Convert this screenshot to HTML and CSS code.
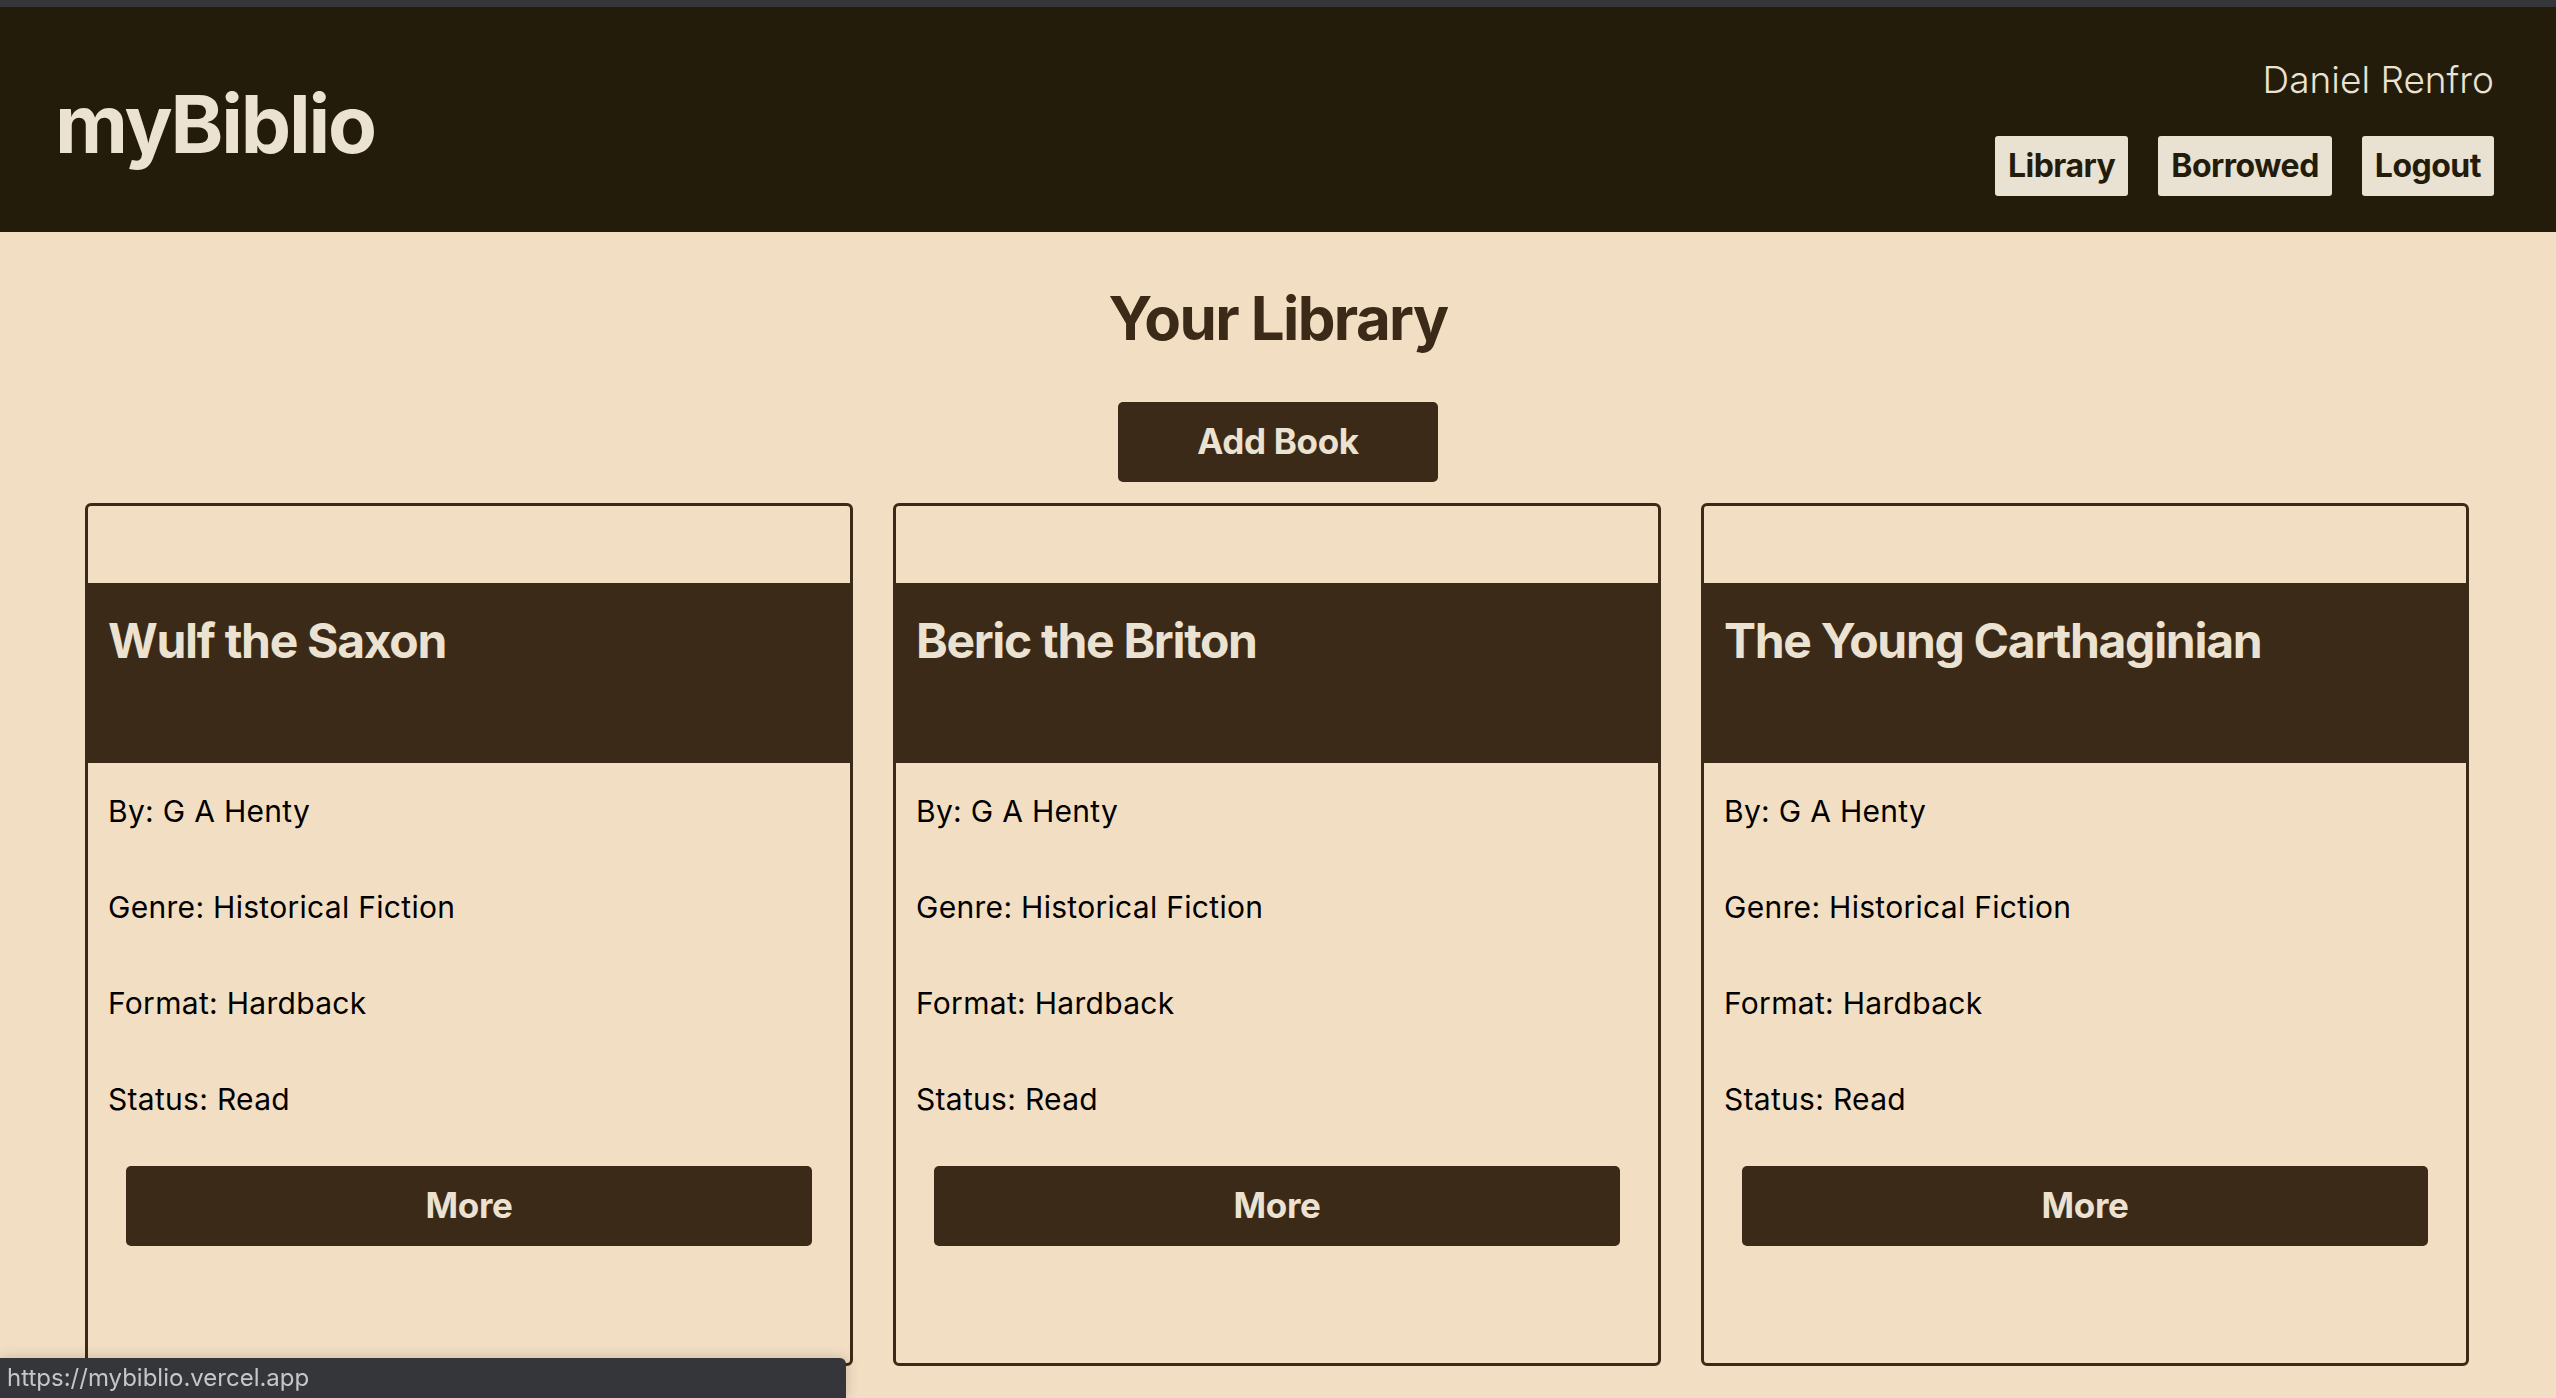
FILE: index.html
```html
<!DOCTYPE html>
<html lang="en">
<head>
<meta charset="utf-8">
<title>myBiblio</title>
<link rel="stylesheet" href="styles.css">
</head>
<body>
<div class="chrome-strip"></div>
<header class="site-header">
  <div class="logo">myBiblio</div>
  <div class="user-area">
    <div class="user-name">Daniel Renfro</div>
    <nav class="nav">
      <button class="nav-btn">Library</button>
      <button class="nav-btn">Borrowed</button>
      <button class="nav-btn">Logout</button>
    </nav>
  </div>
</header>
<main class="main">
  <h1 class="page-title">Your Library</h1>
  <button class="add-btn">Add Book</button>
  <section class="cards">
    <article class="card">
      <div class="card-image"></div>
      <div class="card-band"><h2 class="card-title">Wulf the Saxon</h2></div>
      <div class="card-body">
        <p class="card-line">By: G A Henty</p>
        <p class="card-line">Genre: Historical Fiction</p>
        <p class="card-line">Format: Hardback</p>
        <p class="card-line">Status: Read</p>
      </div>
      <button class="more-btn">More</button>
    </article>
    <article class="card">
      <div class="card-image"></div>
      <div class="card-band"><h2 class="card-title">Beric the Briton</h2></div>
      <div class="card-body">
        <p class="card-line">By: G A Henty</p>
        <p class="card-line">Genre: Historical Fiction</p>
        <p class="card-line">Format: Hardback</p>
        <p class="card-line">Status: Read</p>
      </div>
      <button class="more-btn">More</button>
    </article>
    <article class="card">
      <div class="card-image"></div>
      <div class="card-band"><h2 class="card-title">The Young Carthaginian</h2></div>
      <div class="card-body">
        <p class="card-line">By: G A Henty</p>
        <p class="card-line">Genre: Historical Fiction</p>
        <p class="card-line">Format: Hardback</p>
        <p class="card-line">Status: Read</p>
      </div>
      <button class="more-btn">More</button>
    </article>
  </section>
</main>
<div class="status-bar">https://mybiblio.vercel.app</div>
</body>
</html>
```
FILE: styles.css
```css
* { box-sizing: border-box; }
html, body {
  margin: 0;
  padding: 0;
}
body {
  background: #f2dfc3;
  font-family: Inter, "Noto Sans", "Liberation Sans", sans-serif;
  color: #000;
  min-height: 1398px;
}
.chrome-strip {
  height: 7px;
  background: #35363a;
}
.site-header {
  height: 225px;
  background: #231c0b;
  display: flex;
  justify-content: space-between;
  align-items: center;
  padding: 0 62px 0 55px;
}
.logo {
  font-size: 80px;
  font-weight: 700;
  line-height: 1;
  color: #ebe2d2;
  letter-spacing: -2.2px;
  margin-top: 8px;
}
.user-area {
  display: flex;
  flex-direction: column;
  align-items: flex-end;
  margin-top: 14px;
}
.user-name {
  font-size: 37px;
  font-weight: 300;
  line-height: 45px;
  color: #ebe2d2;
  letter-spacing: 0;
}
.nav {
  display: flex;
  gap: 30px;
  margin-top: 34px;
}
.nav-btn {
  font-family: inherit;
  font-size: 32px;
  font-weight: 700;
  line-height: 40px;
  height: 60px;
  padding: 10px 13px;
  border: none;
  border-radius: 3px;
  background: #e9e1d2;
  color: #231c0b;
  letter-spacing: -0.5px;
}
.main {
  display: flex;
  flex-direction: column;
  align-items: center;
}
.page-title {
  margin: 50px 0 0;
  font-size: 60px;
  font-weight: 700;
  line-height: 72px;
  color: #3c2a18;
  letter-spacing: -1.6px;
}
.add-btn {
  margin-top: 48px;
  width: 320px;
  height: 80px;
  padding-bottom: 4px;
  border: none;
  border-radius: 5px;
  background: #3c2a18;
  color: #ebe2d2;
  font-family: inherit;
  font-size: 35px;
  font-weight: 700;
  letter-spacing: -0.3px;
}
.cards {
  align-self: stretch;
  display: grid;
  grid-template-columns: repeat(3, 1fr);
  gap: 40px;
  padding: 0 87px 0 85px;
  margin-top: 21px;
}
.card {
  border: 3px solid #3c2a18;
  border-radius: 6px;
  height: 863px;
  display: flex;
  flex-direction: column;
}
.card-image {
  height: 77px;
}
.card-band {
  height: 180px;
  background: #3b2a18;
  padding: 29px 20px 0;
}
.card-title {
  margin: 0;
  font-size: 48px;
  font-weight: 700;
  line-height: 58px;
  color: #ebe2d2;
  letter-spacing: -1.3px;
}
.card-body {
  display: flex;
  flex-direction: column;
  gap: 60px;
  padding: 30px 20px 0;
}
.card-line {
  margin: 0;
  font-size: 30px;
  line-height: 36px;
  letter-spacing: 0.3px;
}
.more-btn {
  margin: 49px 38px 0;
  height: 80px;
  padding-bottom: 3px;
  border: none;
  border-radius: 5px;
  background: #3b2a18;
  color: #ebe2d2;
  font-family: inherit;
  font-size: 35px;
  font-weight: 700;
  letter-spacing: -0.3px;
}
.status-bar {
  position: fixed;
  left: 0;
  bottom: 0;
  width: 846px;
  height: 40px;
  background: #35363a;
  color: #c4c6ca;
  font-size: 24px;
  line-height: 40px;
  padding-left: 7px;
  border-top-right-radius: 6px;
  box-shadow: 0 0 14px rgba(0, 0, 0, 0.18);
}
```
